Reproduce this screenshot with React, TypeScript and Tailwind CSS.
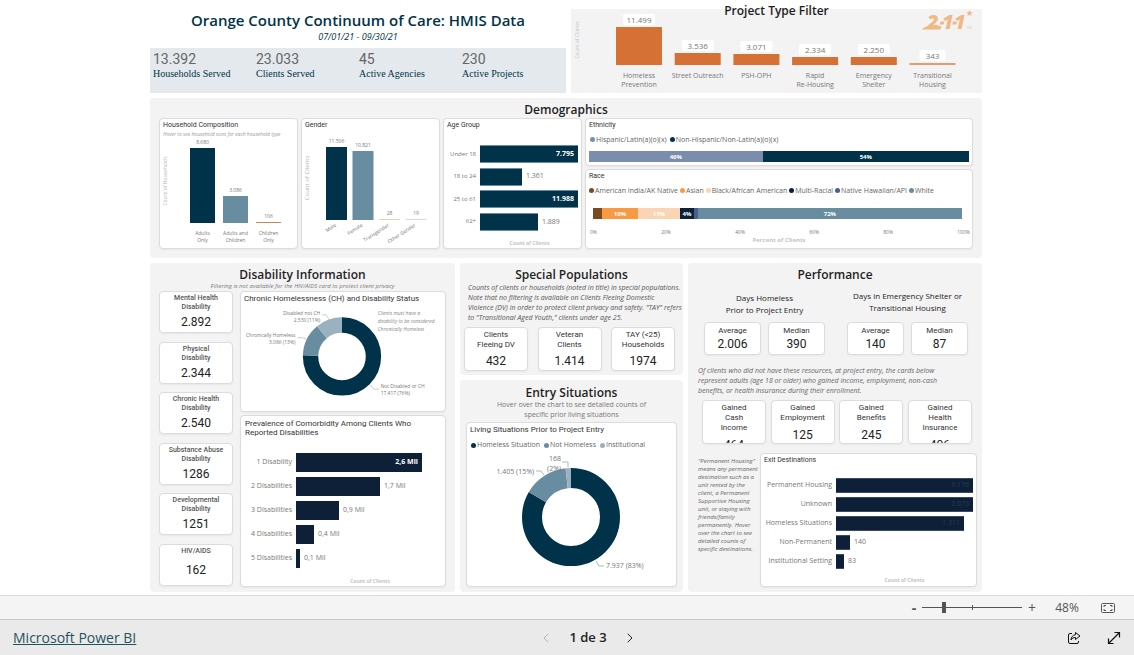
import { useState } from "react";
import type { ReactNode } from "react";
import { ChevronLeft, ChevronRight } from "lucide-react";

const DARK = "#003349";
const STEEL = "#688da0";
const LIGHT = "#9ab1bf";

type Column = { lines: string[]; value: string; height: number; color: string };
type Row = { label: string; value: string; width: number; inside?: boolean };
type Slice = { from: number; size: number; color: string };

const stats = [
  { value: "13.392", label: "Households Served" },
  { value: "23.033", label: "Clients Served" },
  { value: "45", label: "Active Agencies" },
  { value: "230", label: "Active Projects" },
];

const projectTypes = [
  { lines: ["Homeless", "Prevention"], value: "11.499", height: 38 },
  { lines: ["Street Outreach"], value: "3.536", height: 12 },
  { lines: ["PSH-OPH"], value: "3.071", height: 11 },
  { lines: ["Rapid", "Re-Housing"], value: "2.334", height: 8 },
  { lines: ["Emergency", "Shelter"], value: "2.250", height: 8 },
  { lines: ["Transitional", "Housing"], value: "343", height: 2 },
];

const households: Column[] = [
  { lines: ["Adults", "Only"], value: "8.680", height: 75, color: DARK },
  { lines: ["Adults and", "Children"], value: "3.086", height: 27, color: STEEL },
  { lines: ["Children", "Only"], value: "106", height: 1, color: "#c98a55" },
];

const genders: Column[] = [
  { lines: ["Male"], value: "11.506", height: 73, color: DARK },
  { lines: ["Female"], value: "10.821", height: 69, color: STEEL },
  { lines: ["Transgender"], value: "28", height: 1, color: "#eccdb9" },
  { lines: ["Other Gender"], value: "19", height: 1, color: "#c8e0e0" },
];

const ages: Row[] = [
  { label: "Under 18", value: "7.795", width: 98, inside: true },
  { label: "18 to 24", value: "1.361", width: 42 },
  { label: "25 to 61", value: "11.988", width: 98, inside: true },
  { label: "62+", value: "1.889", width: 58 },
];

const comorbidity: Row[] = [
  { label: "1 Disability", value: "2,6 Mil", width: 126, inside: true },
  { label: "2 Disabilities", value: "1,7 Mil", width: 84 },
  { label: "3 Disabilities", value: "0,9 Mil", width: 43 },
  { label: "4 Disabilities", value: "0,4 Mil", width: 18 },
  { label: "5 Disabilities", value: "0,1 Mil", width: 4 },
];

const exits: Row[] = [
  { label: "Permanent Housing", value: "9.176", width: 137, inside: true },
  { label: "Unknown", value: "2.073", width: 137, inside: true },
  { label: "Homeless Situations", value: "1.311", width: 128, inside: true },
  { label: "Non-Permanent", value: "140", width: 14 },
  { label: "Institutional Setting", value: "83", width: 8 },
];

const ethnicity = [
  { label: "Hispanic/Latin(a)(o)(x)", text: "46%", share: 45.7, color: "#7a8dad" },
  { label: "Non-Hispanic/Non-Latin(a)(o)(x)", text: "54%", share: 54.3, color: DARK },
];

const race = [
  { label: "American India/AK Native", text: "", share: 2.5, color: "#7b4a21" },
  { label: "Asian", text: "10%", share: 9.6, color: "#f79a43" },
  { label: "Black/African American", text: "11%", share: 11.5, color: "#fbd5b3" },
  { label: "Multi-Racial", text: "4%", share: 3.7, color: "#0e1f38" },
  { label: "Native Hawaiian/API", text: "", share: 1.1, color: "#44618f" },
  { label: "White", text: "72%", share: 71.6, color: STEEL },
];

const disabilities = [
  { label: "Mental Health Disability", value: "2.892" },
  { label: "Physical Disability", value: "2.344" },
  { label: "Chronic Health Disability", value: "2.540" },
  { label: "Substance Abuse Disability", value: "1286" },
  { label: "Developmental Disability", value: "1251" },
  { label: "HIV/AIDS", value: "162" },
];

const populations = [
  { label: "Clients Fleeing DV", value: "432" },
  { label: "Veteran Clients", value: "1.414" },
  { label: "TAY (<25) Households", value: "1974" },
];

const gained = [
  { words: ["Gained", "Cash", "Income"], value: "464" },
  { words: ["Gained", "Employment"], value: "125" },
  { words: ["Gained", "Benefits"], value: "245" },
  { words: ["Gained", "Health", "Insurance"], value: "406" },
];

function Panel({ className = "", children }: { className?: string; children: ReactNode }) {
  return <section className={`rounded-sm bg-[#f3f3f3] ${className}`}>{children}</section>;
}

function Heading({ children }: { children: ReactNode }) {
  return <h2 className="text-center text-[12px] leading-[14px] font-semibold text-[#1f1f1f]">{children}</h2>;
}

function Card({ title, titleClass = "text-[7px]", className = "", children }: {
  title?: string; titleClass?: string; className?: string; children: ReactNode;
}) {
  return (
    <div className={`overflow-hidden rounded border border-[#dcdcdc] bg-white shadow-xs ${className}`}>
      {title && <h3 className={`px-[3px] pt-[2px] font-[Roboto,sans-serif] leading-[9px] text-[#333] ${titleClass}`}>{title}</h3>}
      {children}
    </div>
  );
}

function ColumnChart({ data, left, pitch, barWidth, base, axis, slanted }: {
  data: Column[]; left: number; pitch: number; barWidth: number; base: number; axis: string; slanted?: boolean;
}) {
  return (
    <svg viewBox={`0 0 137 ${base + 26}`} className="w-full" fill="#777" fontSize="5" textAnchor="middle">
      <text transform={`translate(7 ${base - 42}) rotate(-90)`} fill="#b5b5b5" fontSize={slanted ? 6 : 5}>{axis}</text>
      {data.map((d, i) => {
        const x = left + i * pitch;
        const mid = x + barWidth / 2;
        return (
          <g key={d.value}>
            <rect x={x} y={base - d.height} width={barWidth} height={d.height} fill={d.color} />
            <text x={mid} y={base - d.height - 4}>{d.value}</text>
            {slanted ? (
              <text transform={`translate(${mid} ${base + 6}) rotate(-33)`} textAnchor="end">{d.lines[0]}</text>
            ) : (
              d.lines.map((line, n) => (
                <text key={line} x={mid} y={base + 12 + n * 7}>{line}</text>
              ))
            )}
          </g>
        );
      })}
    </svg>
  );
}

function BarRows({ rows, labelClass, barClass, valueClass, textClass }: {
  rows: Row[]; labelClass: string; barClass: string; valueClass: string; textClass: string;
}) {
  return (
    <>
      {rows.map((r) => (
        <div key={r.label} className={`flex items-center ${textClass}`}>
          <span className={`shrink-0 text-right text-[#777] ${labelClass}`}>{r.label}</span>
          <span className={`ml-1 flex shrink-0 items-center justify-end ${r.inside ? "pr-1" : ""} ${barClass} ${valueClass}`} style={{ width: r.width }}>
            {r.inside && r.value}
          </span>
          {!r.inside && <span className="ml-1 text-[#777]">{r.value}</span>}
        </div>
      ))}
    </>
  );
}

function Legend({ items, className = "" }: { items: { label: string; color: string }[]; className?: string }) {
  return (
    <ul className={`flex items-center whitespace-nowrap text-[#666] ${className}`}>
      {items.map((i) => (
        <li key={i.label} className="flex items-center gap-px">
          <span className="size-[5px] rounded-full" style={{ backgroundColor: i.color }} />
          {i.label}
        </li>
      ))}
    </ul>
  );
}

function StackedBar({ items }: { items: { label: string; text: string; share: number; color: string }[] }) {
  return (
    <div className="flex h-[11px] text-[6px] leading-[12px] font-bold text-white">
      {items.map((i) => (
        <div key={i.label} className="text-center" style={{ width: `${i.share}%`, backgroundColor: i.color }}>{i.text}</div>
      ))}
    </div>
  );
}

function Donut({ cx, cy, r, width, slices }: { cx: number; cy: number; r: number; width: number; slices: Slice[] }) {
  return (
    <g transform={`rotate(-90 ${cx} ${cy})`} fill="none" strokeWidth={width}>
      {slices.map((s) => (
        <circle key={s.color} cx={cx} cy={cy} r={r} stroke={s.color} pathLength="100" strokeDasharray={`${s.size} 100`} strokeDashoffset={-s.from} />
      ))}
    </g>
  );
}

function ProjectFilter() {
  return (
    <svg viewBox="0 0 411 84" className="w-full" textAnchor="middle" fill="#777" fontSize="7">
      <text transform="translate(8 31) rotate(-90)" fill="#c4c4c4" fontSize="5">Count of Clients</text>
      {projectTypes.map((p, i) => {
        const x = 45 + i * 58.7;
        const top = 56 - p.height;
        return (
          <g key={p.value}>
            <rect x={x} y={top} width="46" height={p.height} fill={i === 5 ? "#e09c72" : "#d67136"} />
            <rect x={x + (i === 5 ? 10 : 7)} y={top - 13} width={i === 5 ? 26 : 32} height="11" rx="2" fill="#fff" />
            <text x={x + 23} y={top - 4} fontSize="8">{p.value}</text>
            {p.lines.map((line, n) => (
              <text key={line} x={x + 23} y={69 + n * 9}>{line}</text>
            ))}
          </g>
        );
      })}
      <g fill="#f0b883" fontStyle="italic" fontWeight="800" textAnchor="start">
        <text x="356" y="20" fontSize="20">2</text>
        <text x="371" y="20" fontSize="20">1</text>
        <text x="383" y="20" fontSize="20">1</text>
        <path d="M350.500 20.500c4-3.500 10-5 15-4.500l5 1.500-1 3z" />
        <path d="M369.500 12.500h4l-.8 3h-4zM382 12.500h4l-.8 3h-4z" />
        <path d="m398.500 1 .8 2.100 2.500.1-2 1.500.8 2.300-2.100-1.300-2.200 1.300.8-2.300-2-1.500 2.500-.1z" />
        <text x="396" y="20" fontSize="4" fontWeight="400" fontStyle="normal">OC</text>
      </g>
    </svg>
  );
}

function SmallCard({ label, value }: { label: string; value: string }) {
  return (
    <Card className="h-[33px] w-[57px] text-center font-[Roboto,sans-serif]">
      <p className="pt-[3px] text-[8px] leading-[9px] text-[#333]">{label}</p>
      <p className="pt-[2px] text-[12px] leading-[14px] text-[#222]">{value}</p>
    </Card>
  );
}

function Demographics() {
  return (
    <Panel className="h-[160px] px-[9px] pt-[5px]">
      <Heading>Demographics</Heading>
      <div className="mt-px grid grid-cols-[139fr_139fr_139fr_388fr] gap-[3px]">
        <Card title="Household Composition" className="h-[131px]">
          <p className="px-[3px] text-[5px] leading-[8px] text-[#999] italic">Hover to see household sizes for each household type</p>
          <ColumnChart data={households} left={30} pitch={33} barWidth={25} base={85} axis="Count of Households" />
        </Card>
        <Card title="Gender" className="h-[131px]">
          <ColumnChart data={genders} left={24} pitch={26.5} barWidth={21} base={90} axis="Count of Clients" slanted />
        </Card>
        <Card title="Age Group" className="h-[131px]">
          <div className="mt-[15px] flex h-[86px] flex-col justify-between">
            <BarRows rows={ages} textClass="text-[7px]" labelClass="w-8 text-[6px]" barClass="h-[18px] border-y border-[#688da0] bg-[#003349]" valueClass="font-bold text-white" />
          </div>
          <p className="mt-2 pl-[34px] text-center text-[5px] leading-[8px] font-bold text-[#c4c4c4]">Count of Clients</p>
        </Card>
        <div className="flex flex-col gap-[3px]">
          <Card title="Ethnicity" className="h-12">
            <Legend items={ethnicity} className="gap-[3px] px-1 pt-[5px] text-[7px] leading-[9px]" />
            <div className="px-[3px] pt-[7px]"><StackedBar items={ethnicity} /></div>
          </Card>
          <Card title="Race" className="h-20">
            <Legend items={race} className="gap-[2px] px-[3px] pt-[5px] text-[7px] leading-[9px]" />
            <div className="pt-[13px] pr-[10px] pl-[7px]"><StackedBar items={race} /></div>
            <div className="flex justify-between pt-[9px] pr-[2px] pl-1 text-[5px] leading-[8px] text-[#777]">
              {["0%", "20%", "40%", "60%", "80%", "100%"].map((t) => <span key={t}>{t}</span>)}
            </div>
            <p className="text-center text-[6px] leading-[9px] font-bold text-[#c4c4c4]">Percent of Clients</p>
          </Card>
        </div>
      </div>
    </Panel>
  );
}

function Disability() {
  return (
    <Panel className="px-[9px] pt-[5px] pb-[5px]">
      <Heading>Disability Information</Heading>
      <p className="text-center text-[6px] leading-[8px] text-[#777] italic">Filtering is not available for the HIV/AIDS card to protect client privacy</p>
      <div className="mt-px flex gap-[7px]">
        <div className="flex h-[295px] w-[74px] shrink-0 flex-col justify-between">
          {disabilities.map((d) => (
            <Card key={d.label} className="flex h-[42px] flex-col text-center font-[Roboto,sans-serif]">
              <p className="mx-auto w-14 pt-[2px] text-[7px] leading-[9px] font-medium text-[#555]">{d.label}</p>
              <p className="my-auto text-[12px] leading-[14px] text-[#222]">{d.value}</p>
            </Card>
          ))}
        </div>
        <div className="flex min-w-0 flex-1 flex-col gap-[3px]">
          <Card title="Chronic Homelessness (CH) and Disability Status" titleClass="text-[8px]" className="h-[121px]">
            <svg viewBox="0 0 206 106" className="w-full" fontSize="5" fill="#777">
              <Donut cx={102} cy={54} r={31.75} width={15.5} slices={[
                { from: 0, size: 75.5, color: DARK },
                { from: 75.5, size: 13.5, color: STEEL },
                { from: 89, size: 11, color: LIGHT },
              ]} />
              <g textAnchor="end">
                <text x="80" y="12">Disabled not CH</text>
                <text x="80" y="19">2.530 (11%)</text>
                <text x="55" y="34">Chronically Homeless</text>
                <text x="55" y="41">3.086 (13%)</text>
              </g>
              <text x="141" y="86">Not Disabled or CH</text>
              <text x="141" y="93">17.417 (76%)</text>
              <path d="M82 12h4l3 5M57 35h5l5 2M130 82l4 5h5" fill="none" stroke="#b5b5b5" strokeWidth=".7" />
              <g fontSize="5" fontStyle="italic" fill="#888">
                <text x="138" y="12">Clients must have a</text>
                <text x="138" y="20">disability to be considered</text>
                <text x="138" y="28">Chronically Homeless</text>
              </g>
            </svg>
          </Card>
          <Card className="h-[172px]">
            <h3 className="w-48 pt-[3px] pl-1 font-[Roboto,sans-serif] text-[8px] leading-[9px] text-[#333]">
              Prevalence of Comorbidity Among Clients Who Reported Disabilities
            </h3>
            <div className="mt-4 flex flex-col gap-[5px]">
              <BarRows rows={comorbidity} textClass="text-[7px]" labelClass="w-[51px]" barClass="h-[19px] bg-[#0e1f38]" valueClass="font-bold text-white" />
            </div>
            <p className="mt-[9px] pl-[54px] text-center text-[5px] leading-[8px] font-bold text-[#c4c4c4]">Count of Clients</p>
          </Card>
        </div>
      </div>
    </Panel>
  );
}

function SpecialPopulations() {
  return (
    <Panel className="h-[112px] px-1 pt-[5px]">
      <Heading>Special Populations</Heading>
      <p className="px-1 pt-px text-[7px] leading-[10px] whitespace-nowrap text-[#555] italic">
        Counts of clients or households (noted in title) in special populations.<br />
        Note that no filtering is available on Clients Fleeing Domestic<br />
        Violence (DV) in order to protect client privacy and safety. "TAY" refers<br />
        to "Transitional Aged Youth," clients under age 25.
      </p>
      <div className="mt-1 flex justify-between pr-1">
        {populations.map((p) => (
          <Card key={p.label} className="h-11 w-16 text-center font-[Roboto,sans-serif]">
            <p className="mx-auto w-12 pt-[2px] text-[8px] leading-[10px] text-[#333]">{p.label}</p>
            <p className="pt-1 text-[12px] leading-[14px] text-[#222]">{p.value}</p>
          </Card>
        ))}
      </div>
    </Panel>
  );
}

function EntrySituations() {
  return (
    <Panel className="flex-1 px-[6px] pt-[6px]">
      <Heading>Entry Situations</Heading>
      <p className="mx-auto w-40 text-center text-[7px] leading-[10px] text-[#777]">Hover over the chart to see detailed counts of specific prior living situations</p>
      <Card title="Living Situations Prior to Project Entry" titleClass="text-[8px]" className="mt-[2px] h-[165px]">
        <Legend className="gap-1 px-1 pt-[6px] text-[7px] leading-[10px]" items={[
          { label: "Homeless Situation", color: DARK },
          { label: "Not Homeless", color: STEEL },
          { label: "Institutional", color: LIGHT },
        ]} />
        <svg viewBox="0 0 209 136" className="w-full" fontSize="7" fill="#777">
          <Donut cx={104} cy={67} r={39} width={20} slices={[
            { from: 0, size: 83.5, color: DARK },
            { from: 83.5, size: 14.7, color: STEEL },
            { from: 98.2, size: 1.8, color: LIGHT },
          ]} />
          <g textAnchor="end">
            <text x="94" y="11">168</text>
            <text x="94" y="21">(2%)</text>
            <text x="67" y="24">1.405 (15%)</text>
          </g>
          <text x="139" y="118">7.937 (83%)</text>
          <path d="M95 12h6v5M69 21h5l3 4M129 111l3 5h5" fill="none" stroke="#b5b5b5" />
        </svg>
      </Card>
    </Panel>
  );
}

function Performance() {
  return (
    <Panel className="px-[10px] pt-[5px]">
      <Heading>Performance</Heading>
      <div className="flex justify-between pt-[8px] pr-1 pl-[6px] text-center text-[8px] leading-[12px] text-[#222]">
        <div className="w-[121px]">
          <p className="pt-[2px] whitespace-nowrap">Days Homeless<br />Prior to Project Entry</p>
          <div className="mt-[6px] flex justify-between"><SmallCard label="Average" value="2.006" /><SmallCard label="Median" value="390" /></div>
        </div>
        <div className="w-[121px]">
          <p className="pb-[2px] whitespace-nowrap">Days in Emergency Shelter or<br />Transitional Housing</p>
          <div className="mt-[6px] flex justify-between"><SmallCard label="Average" value="140" /><SmallCard label="Median" value="87" /></div>
        </div>
      </div>
      <p className="mt-[11px] text-[7px] leading-[10px] whitespace-nowrap text-[#666] italic">
        Of clients who did not have these resources, at project entry, the cards below<br />
        represent adults (age 18 or older) who gained income, employment, non-cash<br />
        benefits, or health insurance during their enrollment.
      </p>
      <div className="mt-[4px] flex justify-between pl-1">
        {gained.map((g) => (
          <Card key={g.value} className="h-11 w-16 text-center font-[Roboto,sans-serif]">
            <p className="pt-[2px] text-[8px] leading-[10px] text-[#333]">
              {g.words.map((w) => <span key={w} className="block">{w}</span>)}
            </p>
            <p className="pt-[5px] text-[12px] leading-[14px] text-[#222]">{g.value}</p>
          </Card>
        ))}
      </div>
      <div className="mt-[9px] -mr-[5px] flex justify-between">
        <p className="pt-1 text-[6px] leading-[8px] whitespace-nowrap text-[#666] italic">
          "Permanent Housing"<br />means any permanent<br />destination such as a<br />unit rented by the<br />client, a Permanent<br />Supportive Housing<br />unit, or staying with<br />friends/family<br />permanently. Hover<br />over the chart to see<br />detailed counts of<br />specific destinations.
        </p>
        <Card title="Exit Destinations" className="h-[134px] w-[217px] shrink-0">
          <div className="mt-[13px] flex flex-col gap-1">
            <BarRows rows={exits} textClass="text-[7px]" labelClass="w-[71px] whitespace-nowrap" barClass="h-[15px] border-y border-[#3c4a5e] bg-[#0e1f38]" valueClass="text-[#2b3a50]" />
          </div>
          <p className="mt-[7px] pl-[72px] text-center text-[5px] leading-[8px] font-bold text-[#c4c4c4]">Count of Clients</p>
        </Card>
      </div>
    </Panel>
  );
}

export default function App() {
  const [zoom, setZoom] = useState(48);
  const [page, setPage] = useState(1);

  return (
    <div className="flex min-h-screen flex-col bg-white font-['Open_Sans',sans-serif] text-[#333]">
      <main className="mx-auto flex w-full max-w-[834px] flex-1 flex-col gap-[5px] pr-[2px]">
        <header className="grid grid-cols-[416fr_411fr] gap-[5px]">
          <div className="flex flex-col text-center">
            <h1 className="pt-[10px] text-[15px] leading-[20px] font-semibold text-[#003349]">Orange County Continuum of Care: HMIS Data</h1>
            <p className="text-[9px] leading-[13px] text-[#003349] italic">07/01/21 - 09/30/21</p>
            <dl className="mt-[5px] grid flex-1 grid-cols-[103px_103px_103px_auto] bg-[#e4e9ed] pt-1 pl-[3px] text-left">
              {stats.map((s) => (
                <div key={s.label} className="flex flex-col-reverse justify-end">
                  <dt className="font-['Liberation_Serif',serif] text-[10px] leading-[13px] text-[#003349]">{s.label}</dt>
                  <dd className="font-[Roboto,sans-serif] text-[14px] leading-[15px] text-[#666]">{s.value}</dd>
                </div>
              ))}
            </dl>
          </div>
          <div className="relative pt-[9px]">
            <div className="absolute inset-x-0 top-1"><Heading>Project Type Filter</Heading></div>
            <div className="bg-[#f3f3f3]"><ProjectFilter /></div>
          </div>
        </header>
        <Demographics />
        <div className="grid grid-cols-[minmax(0,305fr)_minmax(0,223fr)_minmax(0,294fr)] gap-[5px]">
          <Disability />
          <div className="flex flex-col gap-[5px]">
            <SpecialPopulations />
            <EntrySituations />
          </div>
          <Performance />
        </div>
      </main>
      <div className="mt-[3px] flex h-6 shrink-0 items-center justify-end border-t border-[#dcdcdc] bg-[#f4f4f4] pr-[18px] text-[#555]">
        <button aria-label="Zoom out" className="w-4 text-[14px] leading-[14px] font-bold" onClick={() => setZoom(Math.max(10, zoom - 10))}>-</button>
        <div className="flex h-3 w-[100px] items-center bg-[linear-gradient(#555,#555),linear-gradient(#555,#555)] bg-[length:100%_1px,1px_5px] bg-center bg-no-repeat">
          <input
            type="range"
            aria-label="Zoom"
            min={10}
            max={190}
            value={zoom}
            onChange={(e) => setZoom(Number(e.target.value))}
            className="w-full appearance-none bg-transparent [&::-webkit-slider-thumb]:h-[11px] [&::-webkit-slider-thumb]:w-1 [&::-webkit-slider-thumb]:appearance-none [&::-webkit-slider-thumb]:bg-[#555]"
          />
        </div>
        <button aria-label="Zoom in" className="w-5 text-[14px] leading-[14px]" onClick={() => setZoom(Math.min(190, zoom + 10))}>+</button>
        <span className="w-[50px] text-center text-[12px]">{zoom}%</span>
        <button aria-label="Fit to page" className="ml-2">
          <svg width="16" height="12" viewBox="0 0 16 12" fill="none" stroke="#555">
            <rect x="1.500" y="1.500" width="13" height="9" rx="1" />
            <path d="M4 5V3.500h2M10 3.500h2V5M12 7v1.500h-2M6 8.500H4V7" />
          </svg>
        </button>
      </div>
      <footer className="grid h-9 shrink-0 grid-cols-3 items-center border-t border-[#c8c8c8] bg-[#eaeaea] px-[13px]">
        <a href="https://powerbi.microsoft.com" className="text-[14px] text-[#1f545e] underline">Microsoft Power BI</a>
        <nav className="flex items-center justify-center gap-[15px] pl-[42px]">
          <button aria-label="Previous page" onClick={() => setPage(Math.max(1, page - 1))} className="text-[#b5b5b5]"><ChevronLeft size={16} strokeWidth={1.5} /></button>
          <span className="text-[13px] font-semibold text-[#222]">{page} de 3</span>
          <button aria-label="Next page" onClick={() => setPage(Math.min(3, page + 1))} className="text-[#222]"><ChevronRight size={16} strokeWidth={1.5} /></button>
        </nav>
        <div className="flex items-center justify-end gap-[26px]">
          <button aria-label="Share">
            <svg width="14" height="14" viewBox="0 0 14 14" fill="none" stroke="#111" strokeLinejoin="round">
              <path d="M5 2.500H3a1.500 1.500 0 0 0-1.500 1.500v7A1.500 1.500 0 0 0 3 12.500h7a1.500 1.500 0 0 0 1.500-1.500v-1" />
              <path d="M8.500 1.500 13 5 8.500 8.500v-2C6.500 6.500 5 7.200 4 9c.2-3 1.800-5 4.500-5.300z" />
            </svg>
          </button>
          <button aria-label="Full screen">
            <svg width="14" height="14" viewBox="0 0 14 14" fill="none" stroke="#111" strokeWidth="1.200">
              <path d="M1.500 12.500l11-11M7.500 1.500h5v5M1.500 7.500v5h5" />
            </svg>
          </button>
        </div>
      </footer>
    </div>
  );
}
